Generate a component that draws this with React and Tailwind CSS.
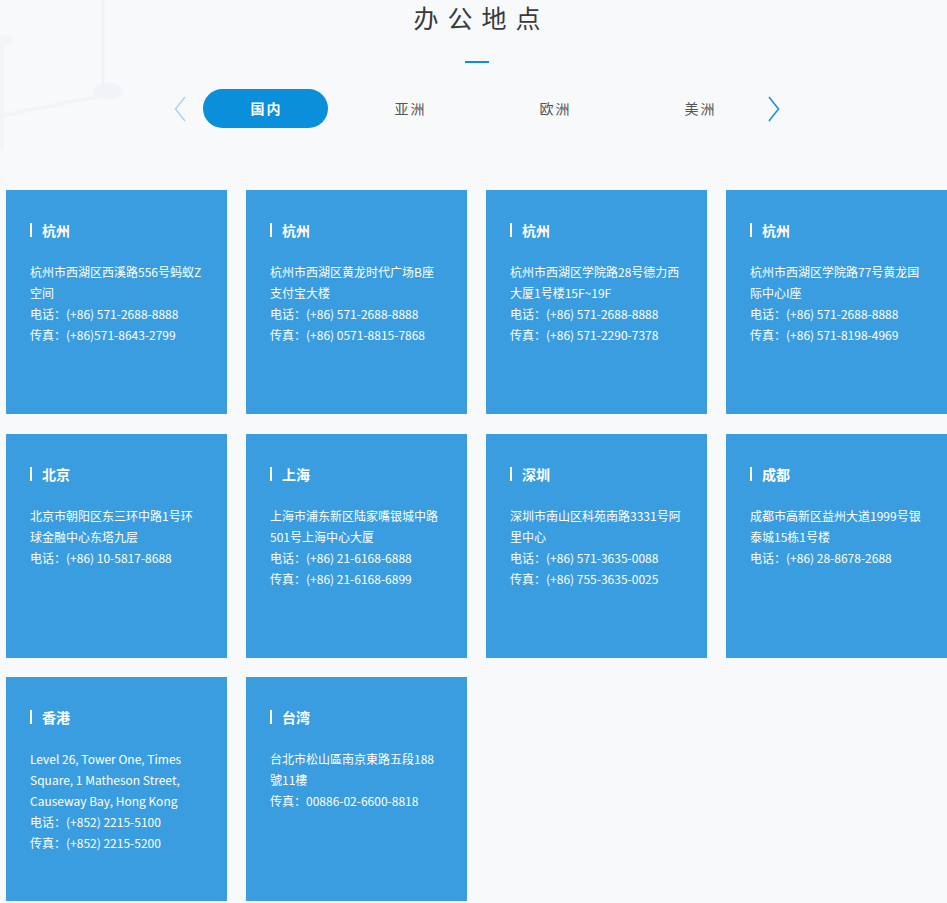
import { useState } from "react";

const tabs = ["国内", "亚洲", "欧洲", "美洲"];

const offices = [
  {
    city: "杭州",
    lines: ["杭州市西湖区西溪路556号蚂蚁Z空间", "电话：(+86) 571-2688-8888", "传真：(+86)571-8643-2799"],
  },
  {
    city: "杭州",
    lines: ["杭州市西湖区黄龙时代广场B座支付宝大楼", "电话：(+86) 571-2688-8888", "传真：(+86) 0571-8815-7868"],
  },
  {
    city: "杭州",
    lines: ["杭州市西湖区学院路28号德力西大厦1号楼15F~19F", "电话：(+86) 571-2688-8888", "传真：(+86) 571-2290-7378"],
  },
  {
    city: "杭州",
    lines: ["杭州市西湖区学院路77号黄龙国际中心I座", "电话：(+86) 571-2688-8888", "传真：(+86) 571-8198-4969"],
  },
  {
    city: "北京",
    lines: ["北京市朝阳区东三环中路1号环球金融中心东塔九层", "电话：(+86) 10-5817-8688"],
  },
  {
    city: "上海",
    lines: ["上海市浦东新区陆家嘴银城中路501号上海中心大厦", "电话：(+86) 21-6168-6888", "传真：(+86) 21-6168-6899"],
  },
  {
    city: "深圳",
    lines: ["深圳市南山区科苑南路3331号阿里中心", "电话：(+86) 571-3635-0088", "传真：(+86) 755-3635-0025"],
  },
  {
    city: "成都",
    lines: ["成都市高新区益州大道1999号银泰城15栋1号楼", "电话：(+86) 28-8678-2688"],
  },
  {
    city: "香港",
    lines: [
      "Level 26, Tower One, Times Square, 1 Matheson Street, Causeway Bay, Hong Kong",
      "电话：(+852) 2215-5100",
      "传真：(+852) 2215-5200",
    ],
  },
  {
    city: "台湾",
    lines: ["台北市松山區南京東路五段188號11樓", "传真：00886-02-6600-8818"],
  },
];

function Chevron({ dir, className }) {
  return (
    <svg viewBox="0 0 12 26" className={className} fill="none">
      {dir === "left" ? (
        <path d="M11 1 L1.5 13 L11 25" stroke="currentColor" strokeWidth="1.4" />
      ) : (
        <path d="M1 1 L10.5 13 L1 25" stroke="currentColor" strokeWidth="1.6" />
      )}
    </svg>
  );
}

function OfficeCard({ office }) {
  return (
    <div className="h-[224px] bg-[#3a9de0] px-[24px] pt-[30px] text-white">
      <div className="flex items-center gap-[10px]">
        <span className="h-[14px] w-[2px] bg-white" />
        <span className="text-[14px] font-bold leading-[20px]">{office.city}</span>
      </div>
      <div className="mt-[21px] text-[12px] leading-[21px]">
        {office.lines.map((line, i) => (
          <p key={i}>{line}</p>
        ))}
      </div>
    </div>
  );
}

export default function App() {
  const [active, setActive] = useState(0);

  return (
    <div
      className="relative min-h-[903px] overflow-hidden bg-[#f7f9fb]"
      style={{ fontFamily: '"Noto Sans CJK SC", "Noto Sans", sans-serif' }}
    >
      {/* faint background decoration */}
      <svg className="pointer-events-none absolute left-0 top-0 h-[150px] w-[160px]" viewBox="0 0 160 150" fill="none">
        <path d="M103 0 V88" stroke="#f0f4f8" strokeWidth="3" />
        <path d="M0 116 L100 96" stroke="#f1f5f9" strokeWidth="4" />
        <ellipse cx="108" cy="91" rx="15" ry="8" fill="#f0f4f8" />
        <path d="M2 40 V150" stroke="#f1f5f9" strokeWidth="3" />
        <ellipse cx="5" cy="40" rx="7" ry="5" fill="#f1f5f9" />
      </svg>

      <div className="relative flex flex-col items-center pl-[7px]">
        <h2 className="pl-[9px] text-[25px] font-normal leading-[34px] tracking-[9px] text-[#3a3a3a]">办公地点</h2>
        <div className="mt-[27px] h-[2px] w-[24px] bg-[#0a8fdb]" />

        <div className="mt-[26px] flex items-center">
          <button className="mr-[17px] text-[#a9d3ee]">
            <Chevron dir="left" className="h-[26px] w-[12px]" />
          </button>
          <div className="flex gap-[20px]">
            {tabs.map((t, i) => (
              <button
                key={t}
                onClick={() => setActive(i)}
                className={
                  i === active
                    ? "h-[39px] w-[125px] rounded-full bg-[#0a8fdb] pl-[2px] text-[14px] font-bold tracking-[2px] text-white"
                    : "h-[39px] w-[125px] rounded-full text-[14px] tracking-[2px] text-[#555]"
                }
              >
                {t}
              </button>
            ))}
          </div>
          <button className="ml-[5px] text-[#1e8fd5]">
            <Chevron dir="right" className="h-[26px] w-[12px]" />
          </button>
        </div>
      </div>

      <div className="relative mt-[62px] grid grid-cols-[repeat(4,221px)] gap-x-[19px] gap-y-[19.5px] pl-[6px]">
        {offices.map((o, i) => (
          <OfficeCard key={i} office={o} />
        ))}
      </div>
    </div>
  );
}
